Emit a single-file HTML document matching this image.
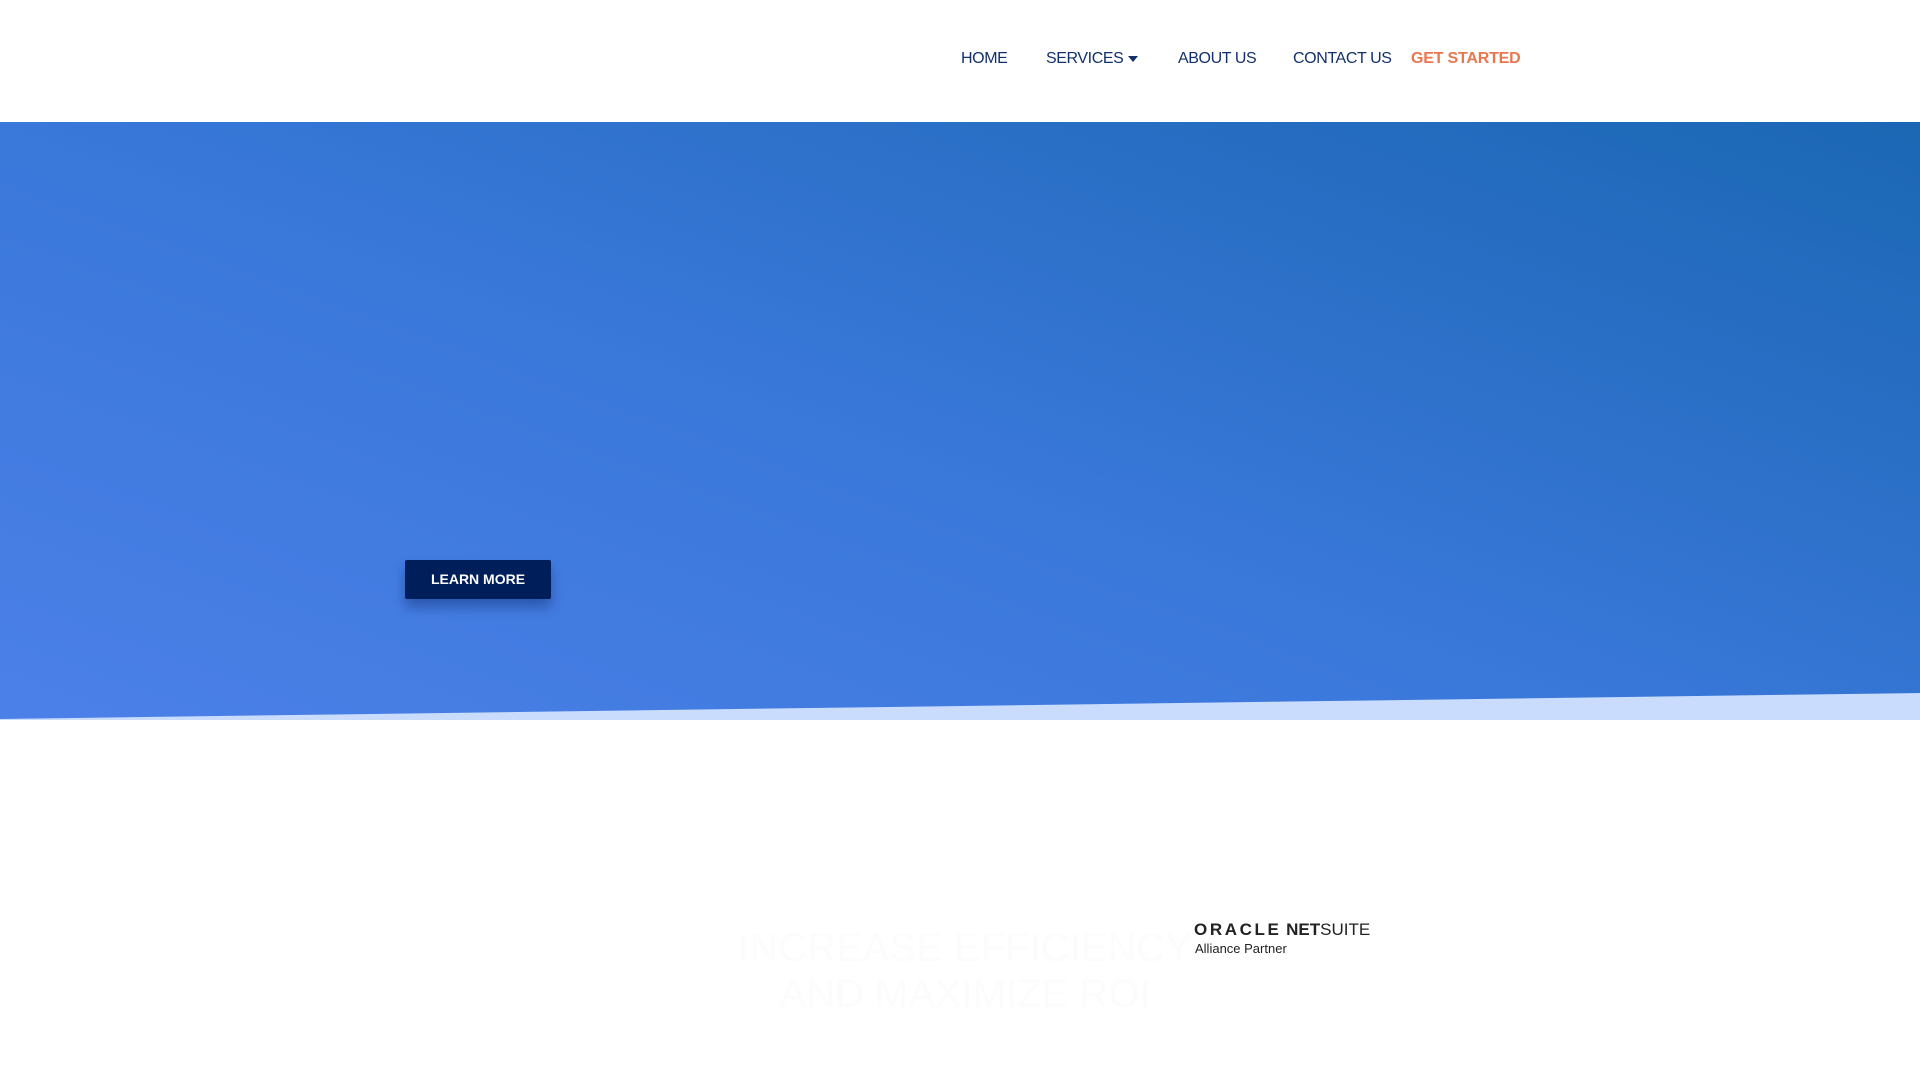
<!DOCTYPE html>
<html><head><style>
html,body{margin:0;padding:0;width:1920px;height:1080px;overflow:hidden;background:#fff;font-family:"Liberation Sans",sans-serif}
.nav a{position:absolute;top:49px;font-size:16px;letter-spacing:-0.4px;color:#13306b;text-decoration:none;line-height:20px;white-space:nowrap}
.hero{position:absolute;left:0;top:122px;width:1920px;height:598px;background:linear-gradient(200deg,#1b67b4 0%,#3a78da 55%,#4b80e8 100%);clip-path:polygon(0 0,1920px 0,1920px 571px,0 597px)}
.band{position:absolute;left:0;top:690px;width:1920px;height:30px;background:#cadcfd}
.btn{position:absolute;left:405px;top:560px;width:146px;height:39px;background:#001e5a;border-radius:2px;box-shadow:0 8px 12px rgba(0,20,80,.35);color:#fff;font-weight:bold;font-size:14px;text-align:center;line-height:39px}
</style></head><body>
<div class="nav">
<a style="left:961px">HOME</a>
<a style="left:1046px">SERVICES</a>
<svg style="position:absolute;left:1128px;top:56px" width="10" height="7"><path d="M0 0H10L5 6Z" fill="#13306b"/></svg>
<a style="left:1178px">ABOUT US</a>
<a style="left:1293px">CONTACT US</a>
<a style="left:1411px;color:#e8774f;font-weight:bold;letter-spacing:-0.2px">GET STARTED</a>
</div>
<div class="band"></div>
<div class="hero"></div>
<div class="btn">LEARN MORE</div>
<div style="position:absolute;left:1194px;top:920px;font-size:17px;color:#222;white-space:nowrap"><span style="letter-spacing:2.6px;font-weight:bold">ORACLE</span> <b>NET</b>SUITE</div>
<div style="position:absolute;left:1195px;top:941px;font-size:13px;color:#222">Alliance Partner</div>
<div style="position:absolute;left:700px;top:925px;width:530px;text-align:center;font-size:40px;line-height:46px;color:#fcfcfd;white-space:nowrap">INCREASE EFFICIENCY<br>AND MAXIMIZE ROI</div>
</body></html>
